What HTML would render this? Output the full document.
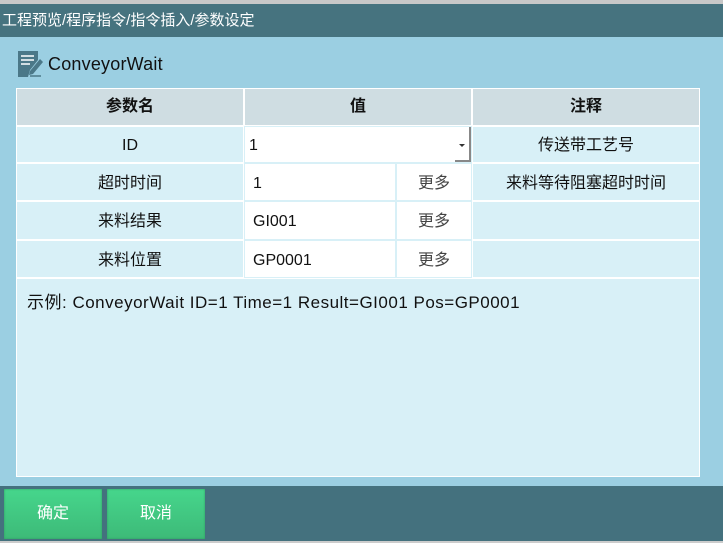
<!DOCTYPE html>
<html><head><meta charset="utf-8"><style>
*{margin:0;padding:0;box-sizing:border-box}
body{width:723px;height:543px;overflow:hidden;background:#9bcfe2;font-family:"Liberation Sans","Noto Sans CJK SC",sans-serif;position:relative}
.a{position:absolute}
.top{left:0;top:0;width:723px;height:4px;background:#c8c8c8}
.title{left:0;top:4px;width:723px;height:33px;background:#46737f;color:#fff;font-size:15px;line-height:33px;padding-left:2px}
.c{text-align:center;font-size:16px;color:#111;background:#d8f0f7;white-space:nowrap}
.h{background:#cfdde2;font-weight:bold}
.w{background:#fff;text-align:left;padding-left:8px;box-shadow:0 0 0 1px #d8f0f7}
.m{background:#fff;color:#444;box-shadow:0 0 0 1px #d8f0f7}
.foot{left:0;top:486px;width:723px;height:55px;background:#44717e}
.btn{top:489px;height:50px;width:98px;background:linear-gradient(#46d68c,#3dba78);color:#fff;font-size:16px;line-height:50px;text-align:center;box-shadow:inset 0 0 2px #2f9a60}
</style></head><body>
<div class="a top"></div>
<div class="a title">工程预览/程序指令/指令插入/参数设定</div>
<svg class="a" style="left:17px;top:50px" width="26" height="28" viewBox="0 0 26 28"><path d="M1 1h20v9l-8 10-2 7H1z" fill="#4b7888"/><path d="M4 6h13M4 10h13M4 14h9" stroke="#fff" stroke-width="1.6"/><path d="M23 9l3 3-10 12-4 1 1-4z" fill="#4b7888"/><path d="M13 26h11" stroke="#4b7888" stroke-width="1.5"/></svg>
<div class="a" style="left:48px;top:54px;font-size:18px;color:#111;letter-spacing:0.2px">ConveyorWait</div>
<div class="a" style="left:16px;top:88px;width:684px;height:389px;background:#fff"></div>
<div class="a c h" style="left:17px;top:89px;width:226px;height:36px;line-height:36px">参数名</div>
<div class="a c h" style="left:245px;top:89px;width:226px;height:36px;line-height:36px">值</div>
<div class="a c h" style="left:473px;top:89px;width:226px;height:36px;line-height:36px">注释</div>

<div class="a c" style="left:17px;top:127px;width:226px;height:35px;line-height:38px">ID</div>
<div class="a c w" style="left:245px;top:127px;width:226px;height:35px;line-height:38px;padding-left:4px">1</div>
<div class="a" style="left:455px;top:127px;width:16px;height:35px;border-right:2px solid #888;border-bottom:2px solid #888"></div>
<div class="a" style="left:459px;top:144px;border-left:3px solid transparent;border-right:3px solid transparent;border-top:3px solid #333"></div>
<div class="a c" style="left:473px;top:127px;width:226px;height:35px;line-height:38px">传送带工艺号</div>

<div class="a c" style="left:17px;top:164px;width:226px;height:36px;line-height:40px">超时时间</div>
<div class="a c w" style="left:245px;top:164px;width:150px;height:36px;line-height:40px">1</div>
<div class="a c m" style="left:397px;top:164px;width:74px;height:36px;line-height:40px">更多</div>
<div class="a c" style="left:473px;top:164px;width:226px;height:36px;line-height:40px">来料等待阻塞超时时间</div>

<div class="a c" style="left:17px;top:202px;width:226px;height:37px;line-height:40px">来料结果</div>
<div class="a c w" style="left:245px;top:202px;width:150px;height:37px;line-height:40px">GI001</div>
<div class="a c m" style="left:397px;top:202px;width:74px;height:37px;line-height:40px">更多</div>
<div class="a c" style="left:473px;top:202px;width:226px;height:37px"></div>

<div class="a c" style="left:17px;top:241px;width:226px;height:36px;line-height:40px">来料位置</div>
<div class="a c w" style="left:245px;top:241px;width:150px;height:36px;line-height:40px">GP0001</div>
<div class="a c m" style="left:397px;top:241px;width:74px;height:36px;line-height:40px">更多</div>
<div class="a c" style="left:473px;top:241px;width:226px;height:36px"></div>

<div class="a" style="left:17px;top:279px;width:682px;height:197px;background:#d8f0f7;font-size:17px;letter-spacing:0.5px;color:#111;padding:9px 0 0 10px;white-space:nowrap">示例: ConveyorWait ID=1 Time=1 Result=GI001 Pos=GP0001</div>
<div class="a foot"></div>
<div class="a btn" style="left:4px">确定</div>
<div class="a btn" style="left:107px">取消</div>
<div class="a" style="left:0;top:541px;width:723px;height:2px;background:#ccc"></div>
</body></html>
